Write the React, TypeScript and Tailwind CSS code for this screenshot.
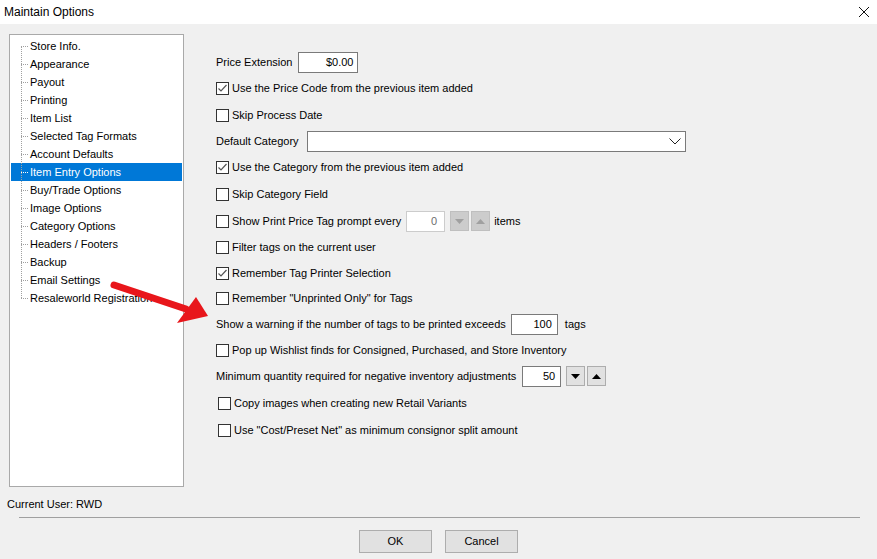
import React from 'react';

const font = { fontFamily: '"Liberation Sans", Arial, sans-serif' };

const treeItems = [
  'Store Info.',
  'Appearance',
  'Payout',
  'Printing',
  'Item List',
  'Selected Tag Formats',
  'Account Defaults',
  'Item Entry Options',
  'Buy/Trade Options',
  'Image Options',
  'Category Options',
  'Headers / Footers',
  'Backup',
  'Email Settings',
  'Resaleworld Registration',
];

function CheckBox({ checked }: { checked?: boolean }) {
  return (
    <span className="w-[13px] h-[13px] border border-[#333333] bg-white flex items-center justify-center shrink-0">
      {checked && (
        <svg width="11" height="11" viewBox="0 0 11 11">
          <path d="M1.5 5.5 L4 8 L9.5 2" fill="none" stroke="#555" strokeWidth="1.2" />
        </svg>
      )}
    </span>
  );
}

function CheckRow({ label, checked, h, indent }: { label: string; checked?: boolean; h: string; indent?: boolean }) {
  return (
    <div className={`flex items-center ${h} ${indent ? 'pl-[2px]' : ''}`}>
      <CheckBox checked={checked} />
      <span className="ml-[3px]">{label}</span>
    </div>
  );
}

function SpinBtn({ dir, disabled }: { dir: 'up' | 'down'; disabled?: boolean }) {
  const fill = disabled ? '#a0a0a0' : '#000';
  return (
    <span
      className={`w-[19px] h-[20px] flex items-center justify-center border ${
        disabled ? 'bg-[#cccccc] border-[#bfbfbf]' : 'bg-[#e1e1e1] border-[#adadad]'
      }`}
    >
      <svg width="9" height="5" viewBox="0 0 9 5">
        {dir === 'down' ? <path d="M0 0 H9 L4.5 5 Z" fill={fill} /> : <path d="M0 5 H9 L4.5 0 Z" fill={fill} />}
      </svg>
    </span>
  );
}

export default function App() {
  return (
    <div className="w-[877px] h-[559px] bg-[#f0f0f0] text-[11px] text-black flex flex-col overflow-hidden" style={font}>
      {/* Title bar */}
      <div className="h-[24px] bg-white flex items-center justify-between pl-[4px] pr-[7px] shrink-0">
        <span className="text-[12px]">Maintain Options</span>
        <svg width="12" height="12" viewBox="0 0 12 12">
          <path d="M1 1 L11 11 M11 1 L1 11" stroke="#111" strokeWidth="1" />
        </svg>
      </div>

      <div className="flex flex-1">
        {/* Tree */}
        <div className="pl-[9px] pt-[10px] shrink-0">
          <div className="w-[175px] h-[453px] bg-white border border-[#a9a9a9] pt-[2px] pl-[1px] pr-[1px] relative">
            <div className="absolute left-[11px] top-[11px] h-[252px] border-l border-dotted border-[#a0a0a0]" />
            {treeItems.map((t) => {
              const sel = t === 'Item Entry Options';
              return (
                <div
                  key={t}
                  className={`h-[18px] flex items-center whitespace-nowrap overflow-hidden ${sel ? 'bg-[#0078d7] text-white' : ''}`}
                >
                  <span className={`ml-[10px] w-[7px] border-t border-dotted ${sel ? 'border-white' : 'border-[#a0a0a0]'}`} />
                  <span className="ml-[2px]">{t}</span>
                </div>
              );
            })}
          </div>
        </div>

        {/* Options */}
        <div className="pl-[32px] pt-[25px] flex flex-col">
          <div className="flex items-center h-[26px]">
            <span>Price Extension</span>
            <span className="ml-[6px] w-[60px] h-[21px] bg-white border border-[#7a7a7a] flex items-center justify-end pr-[4px]">$0.00</span>
          </div>
          <CheckRow h="h-[27px]" checked label="Use the Price Code from the previous item added" />
          <CheckRow h="h-[26px]" label="Skip Process Date" />
          <div className="flex items-center h-[26px]">
            <span>Default Category</span>
            <span className="ml-[8px] w-[379px] h-[21px] bg-white border border-[#7a7a7a] flex items-center justify-end pr-[4px]">
              <svg width="12" height="7" viewBox="0 0 12 7">
                <path d="M0.5 0.5 L6 6 L11.5 0.5" fill="none" stroke="#222" strokeWidth="1" />
              </svg>
            </span>
          </div>
          <CheckRow h="h-[27px]" checked label="Use the Category from the previous item added" />
          <CheckRow h="h-[27px]" label="Skip Category Field" />
          <div className="flex items-center h-[26px]">
            <CheckBox />
            <span className="ml-[3px]">Show Print Price Tag prompt every</span>
            <span className="ml-[5px] w-[39px] h-[21px] bg-white border border-[#cccccc] text-[#6d6d6d] flex items-center justify-end pr-[7px]">0</span>
            <span className="ml-[5px] flex gap-[2px]">
              <SpinBtn dir="down" disabled />
              <SpinBtn dir="up" disabled />
            </span>
            <span className="ml-[4px]">items</span>
          </div>
          <CheckRow h="h-[26px]" label="Filter tags on the current user" />
          <CheckRow h="h-[26px]" checked label="Remember Tag Printer Selection" />
          <CheckRow h="h-[25px]" label='Remember "Unprinted Only" for Tags' />
          <div className="flex items-center h-[26px]">
            <span>Show a warning if the number of tags to be printed exceeds</span>
            <span className="ml-[5px] w-[47px] h-[21px] bg-white border border-[#7a7a7a] flex items-center justify-end pr-[5px]">100</span>
            <span className="ml-[7px]">tags</span>
          </div>
          <CheckRow h="h-[26px]" label="Pop up Wishlist finds for Consigned, Purchased, and Store Inventory" />
          <div className="flex items-center h-[26px]">
            <span>Minimum quantity required for negative inventory adjustments</span>
            <span className="ml-[6px] w-[39px] h-[21px] bg-white border border-[#7a7a7a] flex items-center justify-end pr-[5px]">50</span>
            <span className="ml-[5px] flex gap-[2px]">
              <SpinBtn dir="down" />
              <SpinBtn dir="up" />
            </span>
          </div>
          <CheckRow h="h-[28px]" indent label="Copy images when creating new Retail Variants" />
          <CheckRow h="h-[26px]" indent label='Use "Cost/Preset Net" as minimum consignor split amount' />
        </div>
      </div>

      {/* Footer */}
      <div className="shrink-0">
        <div className="pl-[7px] h-[16px] flex items-center">Current User: RWD</div>
        <div className="ml-[19px] mr-[17px] mt-[5px] border-t border-[#a0a0a0]" />
        <div className="flex justify-center gap-[13px] pt-[12px] pb-[6px]">
          <button className="w-[73px] h-[23px] bg-[#e1e1e1] border border-[#adadad]">OK</button>
          <button className="w-[73px] h-[23px] bg-[#e1e1e1] border border-[#adadad]">Cancel</button>
        </div>
      </div>

      {/* Annotation arrow */}
      <svg className="absolute left-0 top-0 pointer-events-none" width="877" height="559">
        <line x1="114" y1="285" x2="186" y2="309" stroke="#e8161b" strokeWidth="7" strokeLinecap="round" />
        <path d="M177 323 L196 297 L208 316 Z" fill="#e8161b" />
      </svg>
    </div>
  );
}
